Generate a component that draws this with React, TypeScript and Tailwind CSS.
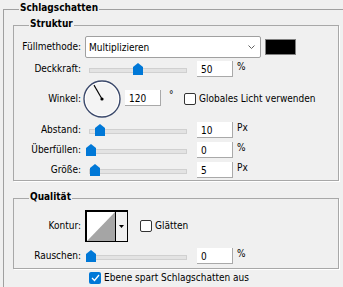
import React from "react";

const Thumb = ({ left, top = 2 }: { left: number; top?: number }) => (
  <svg
    width="10"
    height="12"
    viewBox="0 0 10 12"
    className="absolute"
    style={{ left, top }}
  >
    <path d="M5 0 L10 4 L10 12 L0 12 L0 4 Z" fill="#0078d7" />
  </svg>
);

const Slider = ({ pos }: { pos: number }) => (
  <div className="relative w-[104px] h-[16px] shrink-0">
    <div className="absolute left-[4px] top-[7px] w-[98px] h-[5px] bg-[#e3e3e3] border border-[#d0d0d0]" />
    <Thumb left={pos} />
  </div>
);

const NumBox = ({ v }: { v: string }) => (
  <div className="w-[36px] h-[16px] bg-white border-b border-r border-[#a9a9a9] pl-[4px] pt-[2px] text-[10px] leading-[13px] text-black shrink-0">
    {v}
  </div>
);

const Unit = ({ u }: { u: string }) => (
  <span className="ml-[4px] self-start leading-[12px]">{u}</span>
);

const Label = ({ t }: { t: string }) => (
  <div className="w-[67px] text-right shrink-0 leading-[12px]">{t}</div>
);

const SliderRow = ({
  label,
  pos,
  v,
  u,
  mt,
}: {
  label: string;
  pos: number;
  v: string;
  u: string;
  mt: string;
}) => (
  <div className={`flex items-center h-[16px] ${mt}`}>
    <Label t={label} />
    <div className="ml-[4px] flex items-center">
      <Slider pos={pos} />
      <div className="ml-[8px] flex h-[16px]">
        <NumBox v={v} />
        <Unit u={u} />
      </div>
    </div>
  </div>
);

const CheckBox = ({ checked = false }: { checked?: boolean }) =>
  checked ? (
    <div className="w-[12px] h-[12px] rounded-[2px] bg-[#0078d7] flex items-center justify-center shrink-0">
      <svg width="9" height="8" viewBox="0 0 9 8">
        <path d="M1 4 L3.5 6.5 L8 1" stroke="white" strokeWidth="1.3" fill="none" />
      </svg>
    </div>
  ) : (
    <div className="w-[12px] h-[12px] rounded-[2px] bg-white border border-[#333333] shrink-0" />
  );

const Dial = () => {
  const a = (120 * Math.PI) / 180;
  const x2 = 19 + 16 * Math.cos(a);
  const y2 = 19 - 16 * Math.sin(a);
  return (
    <svg width="38" height="38" viewBox="0 0 38 38" className="ml-[-2px] shrink-0">
      <circle cx="19" cy="19" r="18" fill="#f4f4f4" stroke="#3c4a6c" strokeWidth="1.4" />
      <circle cx="19" cy="19" r="16.6" fill="none" stroke="#ffffff" strokeWidth="1" />
      <line x1="19" y1="19" x2={x2} y2={y2} stroke="#000" strokeWidth="1.1" />
      <circle cx="19" cy="19" r="1.6" fill="#000" />
    </svg>
  );
};

export default function App() {
  return (
    <div className="w-[343px] h-[287px] overflow-hidden bg-[#f0f0f0] pt-[9px] pl-[3px] text-[10px] text-black font-['DejaVu_Sans_Condensed','Liberation_Sans',sans-serif]">
      <div className="relative w-[400px] h-[300px] border-l border-t border-[#a0a0a0] pl-[9px] pt-[15px]">
        <span className="absolute left-[15px] top-[-8px] px-[1px] bg-[#f0f0f0] font-bold leading-[12px]">
          Schlagschatten
        </span>

        {/* Struktur */}
        <div className="relative w-[326px] h-[156px] border border-[#a8a8a8] shadow-[1px_1px_0_#ffffff]">
          <span className="absolute left-[15px] top-[-8px] px-[1px] bg-[#f0f0f0] font-bold leading-[12px]">
            Struktur
          </span>

          {/* Füllmethode */}
          <div className="flex items-center h-[22px] mt-[10px]">
            <Label t="Füllmethode:" />
            <div className="ml-[4px] w-[176px] h-[22px] bg-white border border-[#a0a0a0] rounded-[2px] flex items-center pl-[3px] pr-[5px] justify-between">
              <span>Multiplizieren</span>
              <svg width="7" height="4" viewBox="0 0 7 4">
                <path d="M0.5 0.5 L3.5 3.5 L6.5 0.5" stroke="#606060" fill="none" strokeWidth="1" />
              </svg>
            </div>
            <div className="ml-[4px] w-[31px] h-[16px] bg-black border border-[#808080]" />
          </div>

          <SliderRow label="Deckkraft:" pos={48} v="50" u="%" mt="mt-[3px]" />

          {/* Winkel */}
          <div className="flex items-center h-[38px] mt-[3px]">
            <Label t="Winkel:" />
            <div className="ml-[4px] flex items-center">
              <Dial />
              <div className="ml-[4px] flex h-[16px] mt-[-2px]">
                <NumBox v="120" />
                <span className="w-[23px] pl-[8px] self-start leading-[10px]">°</span>
              </div>
              <CheckBox />
              <span className="ml-[3px] leading-[12px]">Globales Licht verwenden</span>
            </div>
          </div>

          <SliderRow label="Abstand:" pos={10} v="10" u="Px" mt="mt-[4px]" />
          <SliderRow label="Überfüllen:" pos={1} v="0" u="%" mt="mt-[4px]" />
          <SliderRow label="Größe:" pos={5} v="5" u="Px" mt="mt-[4px]" />
        </div>

        {/* Qualität */}
        <div className="relative w-[326px] h-[71px] mt-[17px] border border-[#a8a8a8] shadow-[1px_1px_0_#ffffff]">
          <span className="absolute left-[15px] top-[-8px] px-[1px] bg-[#f0f0f0] font-bold leading-[12px]">
            Qualität
          </span>

          <div className="flex items-center h-[32px] mt-[11px]">
            <Label t="Kontur:" />
            <div className="ml-[4px] w-[43px] h-[32px] border-black border-t-2 border-l-2 border-r border-b flex">
              <svg width="28" height="29" viewBox="0 0 28 29" className="bg-white">
                <path d="M0 29 L28 0 L28 29 Z" fill="#a5a5a5" />
              </svg>
              <div className="w-[1px] bg-black" />
              <div className="flex-1 bg-[#f0f0f0] flex items-center justify-center">
                <svg width="5" height="3" viewBox="0 0 5 3">
                  <path d="M0 0 L5 0 L2.5 3 Z" fill="#000" />
                </svg>
              </div>
            </div>
            <div className="ml-[12px] flex items-center">
              <CheckBox />
              <span className="ml-[3px] leading-[12px]">Glätten</span>
            </div>
          </div>

          <SliderRow label="Rauschen:" pos={1} v="0" u="%" mt="mt-[6px]" />
        </div>

        <div className="flex items-center mt-[3px] ml-[76px] h-[12px]">
          <CheckBox checked />
          <span className="ml-[3px] leading-[12px]">Ebene spart Schlagschatten aus</span>
        </div>
      </div>
    </div>
  );
}
